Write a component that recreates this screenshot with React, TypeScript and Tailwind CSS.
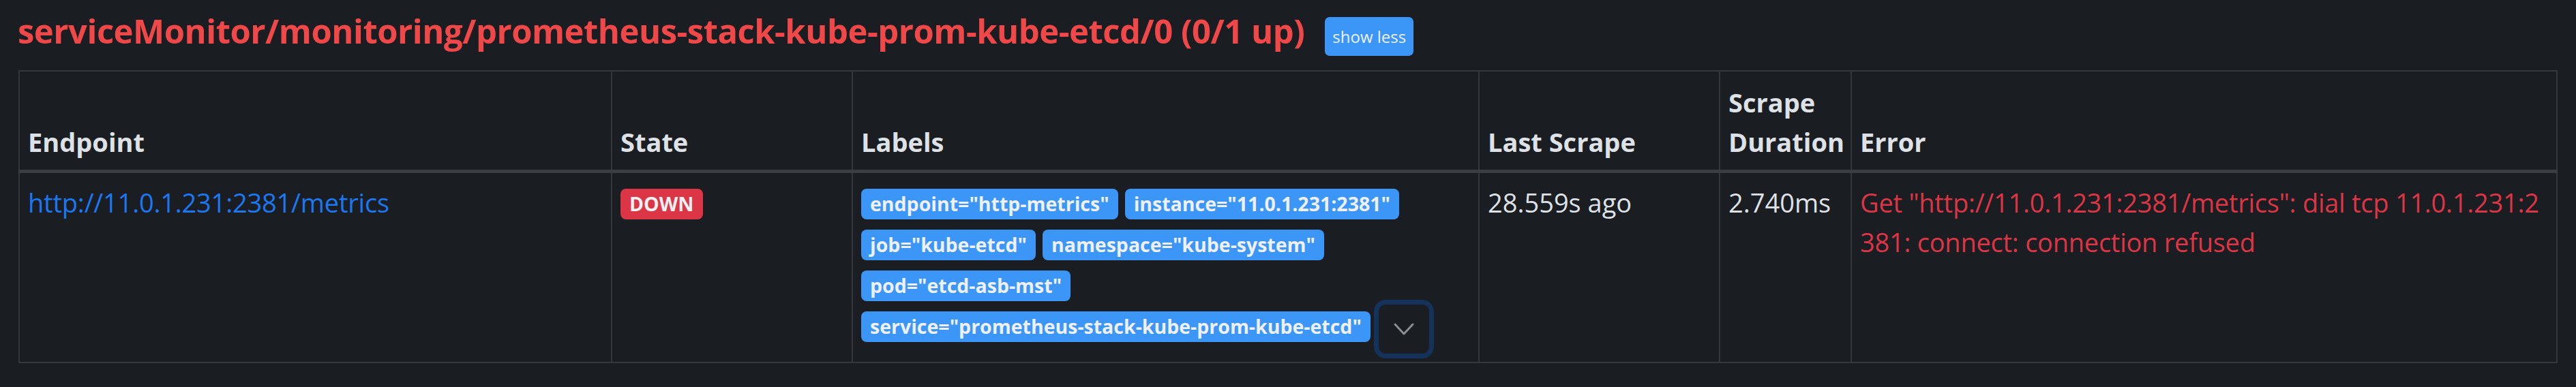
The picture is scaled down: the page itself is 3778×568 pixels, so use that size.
import React from "react";

const labels = [
  'endpoint="http-metrics"',
  'instance="11.0.1.231:2381"',
  'job="kube-etcd"',
  'namespace="kube-system"',
  'pod="etcd-asb-mst"',
];

function Badge({ children, color }: { children: React.ReactNode; color: string }) {
  return (
    <span
      className={`inline-flex h-[45px] items-center rounded-[8px] px-[13px] text-[28.5px] font-bold leading-none text-[#eef0f3] ${color}`}
    >
      {children}
    </span>
  );
}

export default function App() {
  return (
    <div
      className="min-h-[568px] bg-[#1a1d21] pl-[26px] pt-[15px] text-[#dee2e6]"
      style={{ fontFamily: '"Open Sans", "Noto Sans", sans-serif' }}
    >
      <div className="flex items-start gap-[30px]">
        <h2 className="m-0 text-[49px] font-bold leading-[60px] tracking-[-0.5px] text-[#f04848] whitespace-nowrap">
          serviceMonitor/monitoring/prometheus-stack-kube-prom-kube-etcd/0 (0/1 up)
        </h2>
        <button className="mt-[10px] h-[57px] rounded-[7px] bg-[#3b96f7] px-[11px] text-[24px] leading-none text-[#eef0f3]">
          show less
        </button>
      </div>

      <table className="ml-px mt-[21px] w-[3722px] table-fixed border-collapse border-2 border-[#34383d] text-[38px] leading-[58px]">
        <colgroup>
          <col className="w-[869px]" />
          <col className="w-[353px]" />
          <col className="w-[919px]" />
          <col className="w-[353px]" />
          <col className="w-[193px]" />
          <col className="w-[1035px]" />
        </colgroup>
        <thead>
          <tr className="border-b-[5px] border-[#3a3e43]">
            {["Endpoint", "State", "Labels", "Last Scrape", "Scrape Duration", "Error"].map((h) => (
              <th
                key={h}
                className="border-2 border-b-[5px] border-[#34383d] border-b-[#3a3e43] px-[12px] pb-[12px] pt-[16px] text-left align-bottom font-bold"
              >
                {h}
              </th>
            ))}
          </tr>
        </thead>
        <tbody>
          <tr>
            <td className="border-2 border-[#34383d] px-[12px] pb-[12px] pt-[14px] align-top">
              <a className="text-[#1b78f2] tracking-[-0.2px]" href="#">
                http://11.0.1.231:2381/metrics
              </a>
            </td>
            <td className="border-2 border-[#34383d] px-[12px] pb-[12px] pt-[14px] align-top">
              <div className="mt-[9px] flex">
                <Badge color="bg-[#dc3545]">DOWN</Badge>
              </div>
            </td>
            <td className="border-2 border-[#34383d] px-[12px] pb-[12px] pt-[14px] align-top">
              <div className="mt-[9px] flex flex-wrap items-start gap-x-[10px] gap-y-[15px]">
                {labels.map((l) => (
                  <Badge key={l} color="bg-[#3b96f7]">
                    {l}
                  </Badge>
                ))}
                <div className="flex items-start gap-x-[12px]">
                  <Badge color="bg-[#3b96f7]">service="prometheus-stack-kube-prom-kube-etcd"</Badge>
                  <button className="-mt-[10px] flex h-[72px] w-[74px] items-center justify-center rounded-[10px] bg-[#1a1d21] ring-[7px] ring-[#14325a]">
                    <svg width="30" height="18" viewBox="0 0 30 18" fill="none">
                      <polyline
                        points="2,2 15,16 28,2"
                        stroke="#8a8f96"
                        strokeWidth="3"
                        strokeLinecap="round"
                        strokeLinejoin="round"
                      />
                    </svg>
                  </button>
                </div>
              </div>
            </td>
            <td className="border-2 border-[#34383d] px-[12px] pb-[12px] pt-[14px] align-top">28.559s ago</td>
            <td className="border-2 border-[#34383d] px-[12px] pb-[12px] pt-[14px] align-top">2.740ms</td>
            <td className="border-2 border-[#34383d] px-[12px] pb-[12px] pt-[14px] align-top break-all tracking-[-0.25px] text-[#dc3545]">
              Get "http://11.0.1.231:2381/metrics": dial tcp 11.0.1.231:2381: connect: connection refused
            </td>
          </tr>
        </tbody>
      </table>
    </div>
  );
}
